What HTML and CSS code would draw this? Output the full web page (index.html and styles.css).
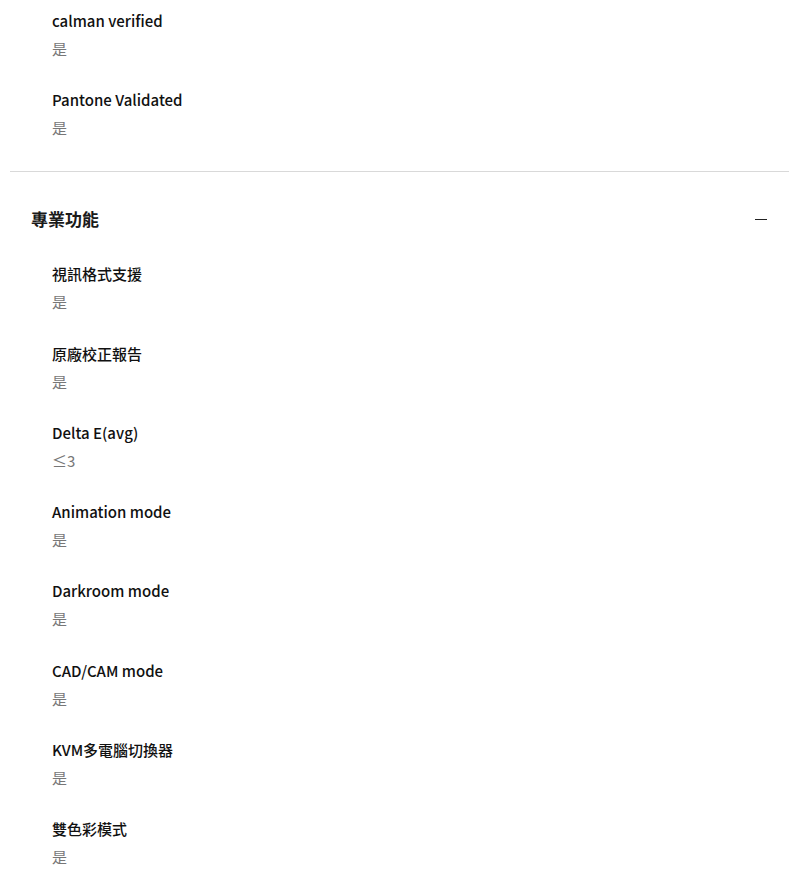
FILE: index.html
```html
<!DOCTYPE html>
<html lang="zh-Hant">
<head>
    <meta charset="UTF-8">
    <title>規格</title>
    <link rel="stylesheet" href="styles.css">
</head>
<body>
    <div class="spec-list">
        <div class="spec-group spec-group-tail">
            <div class="spec-items">
                <div class="spec-item">
                    <div class="spec-label">calman verified</div>
                    <div class="spec-value">是</div>
                </div>
                <div class="spec-item">
                    <div class="spec-label">Pantone Validated</div>
                    <div class="spec-value">是</div>
                </div>
            </div>
        </div>

        <div class="spec-group">
            <div class="spec-header">
                <h3 class="spec-title">專業功能</h3>
                <span class="toggle"></span>
            </div>
            <div class="spec-items">
                <div class="spec-item">
                    <div class="spec-label">視訊格式支援</div>
                    <div class="spec-value">是</div>
                </div>
                <div class="spec-item">
                    <div class="spec-label">原廠校正報告</div>
                    <div class="spec-value">是</div>
                </div>
                <div class="spec-item">
                    <div class="spec-label">Delta E(avg)</div>
                    <div class="spec-value">≤3</div>
                </div>
                <div class="spec-item">
                    <div class="spec-label">Animation mode</div>
                    <div class="spec-value">是</div>
                </div>
                <div class="spec-item">
                    <div class="spec-label">Darkroom mode</div>
                    <div class="spec-value">是</div>
                </div>
                <div class="spec-item">
                    <div class="spec-label">CAD/CAM mode</div>
                    <div class="spec-value">是</div>
                </div>
                <div class="spec-item">
                    <div class="spec-label">KVM多電腦切換器</div>
                    <div class="spec-value">是</div>
                </div>
                <div class="spec-item">
                    <div class="spec-label">雙色彩模式</div>
                    <div class="spec-value">是</div>
                </div>
            </div>
        </div>
    </div>
</body>
</html>
```

FILE: styles.css
```css
* {
    box-sizing: border-box;
}

body {
    margin: 0;
    font-family: "Noto Sans CJK TC", "Noto Sans", sans-serif;
    color: #1a1a1a;
    background: #fff;
}

.spec-list {
    margin: 0 11px 0 10px;
}

.spec-group {
    padding: 0 21px;
}

.spec-group-tail {
    padding-top: 10px;
    padding-bottom: 32px;
    border-bottom: 1px solid #d9d9d9;
}

.spec-header {
    display: flex;
    align-items: center;
    justify-content: space-between;
    padding-top: 35px;
    padding-bottom: 32px;
}

.spec-title {
    margin: 0;
    font-size: 17px;
    line-height: 24px;
    font-weight: 700;
}

.toggle {
    display: block;
    width: 12px;
    height: 1.5px;
    background: #222;
    margin-right: 1px;
}

.spec-items {
    display: flex;
    flex-direction: column;
    gap: 29.3px;
    padding-left: 21px;
}

.spec-label {
    font-size: 15px;
    line-height: 22px;
    font-weight: 500;
    color: #111;
}

.spec-value {
    margin-top: 6px;
    font-size: 15px;
    line-height: 22px;
    color: #777;
}
```
